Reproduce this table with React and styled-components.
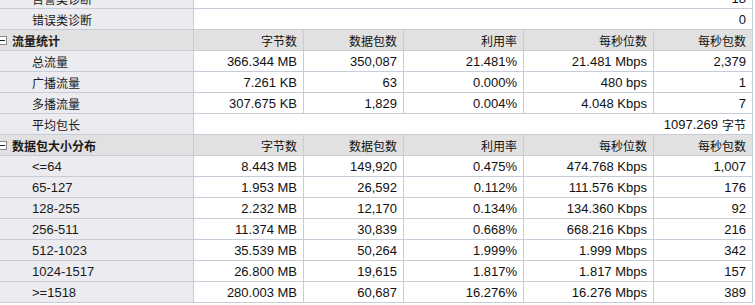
import styled, {createGlobalStyle} from 'styled-components';

const GlobalStyle = createGlobalStyle`
  body {
    margin: 0;
    background: #fff;
    font-family: 'Liberation Sans', 'Noto Sans CJK SC', sans-serif;
    color: #111;
  }
`;

const Viewport = styled.div`
  width: 755px;
  height: 305px;
  overflow: hidden;
`;

const Grid = styled.div`
  display: grid;
  grid-template-columns: 194px 110px 100px 120px 130px 99px;
  grid-auto-rows: 21px;
  width: 753px;
  margin-top: -12px;
`;

const Cell = styled.div`
  box-sizing: border-box;
  display: flex;
  align-items: center;
  border-right: 1px solid #c6ccd8;
  border-bottom: 1px solid #c6ccd8;
  white-space: nowrap;
  overflow: hidden;
`;

const cjkFont = "'Noto Sans CJK SC', sans-serif";
const latinFont = "'Liberation Sans', 'Noto Sans CJK SC', sans-serif";

const LabelCell = styled(Cell)`
  background: ${({$header}) => ($header ? '#e1e1e1' : '#ebebf0')};
  padding-left: ${({$header}) => ($header ? '0' : '32px')};
  font-size: ${({$cjk}) => ($cjk ? '12px' : '13px')};
  font-family: ${({$cjk}) => ($cjk ? cjkFont : latinFont)};
  font-weight: ${({$header}) => ($header ? 700 : 400)};
  color: #1a1a1a;
`;

const ValueCell = styled(Cell)`
  justify-content: flex-end;
  padding-right: 6px;
  background: ${({$header}) => ($header ? '#e1e1e1' : '#fff')};
  font-size: ${({$cjk}) => ($cjk ? '12px' : '13px')};
  font-family: ${({$cjk}) => ($cjk ? cjkFont : latinFont)};
  grid-column: ${({$span}) => ($span ? '2 / -1' : 'auto')};
`;

const Toggle = styled.svg`
  flex: none;
  width: 9px;
  height: 9px;
  margin: 0 5px 0 -2px;
`;

const Unit = styled.span`
  font-family: ${cjkFont};
  font-size: 12px;
  margin-left: 4px;
`;

const headers = ['字节数', '数据包数', '利用率', '每秒位数', '每秒包数'];

const rows = [
  {type: 'merged', label: '告警类诊断', value: '18'},
  {type: 'merged', label: '错误类诊断', value: '0'},
  {type: 'header', label: '流量统计'},
  {type: 'item', label: '总流量', values: ['366.344 MB', '350,087', '21.481%', '21.481 Mbps', '2,379']},
  {type: 'item', label: '广播流量', values: ['7.261 KB', '63', '0.000%', '480 bps', '1']},
  {type: 'item', label: '多播流量', values: ['307.675 KB', '1,829', '0.004%', '4.048 Kbps', '7']},
  {type: 'merged', label: '平均包长', value: '1097.269', unit: '字节'},
  {type: 'header', label: '数据包大小分布'},
  {type: 'item', label: '<=64', values: ['8.443 MB', '149,920', '0.475%', '474.768 Kbps', '1,007']},
  {type: 'item', label: '65-127', values: ['1.953 MB', '26,592', '0.112%', '111.576 Kbps', '176']},
  {type: 'item', label: '128-255', values: ['2.232 MB', '12,170', '0.134%', '134.360 Kbps', '92']},
  {type: 'item', label: '256-511', values: ['11.374 MB', '30,839', '0.668%', '668.216 Kbps', '216']},
  {type: 'item', label: '512-1023', values: ['35.539 MB', '50,264', '1.999%', '1.999 Mbps', '342']},
  {type: 'item', label: '1024-1517', values: ['26.800 MB', '19,615', '1.817%', '1.817 Mbps', '157']},
  {type: 'item', label: '>=1518', values: ['280.003 MB', '60,687', '16.276%', '16.276 Mbps', '389']},
];

const isCjk = (text) => /[\u4e00-\u9fff]/.test(text);

const MinusBox = () => (
  <Toggle viewBox="0 0 9 9">
    <rect x="0.5" y="0.5" width="8" height="8" fill="#fff" stroke="#8a8a8a" />
    <path d="M2 4.5h5" stroke="#222" strokeWidth="1" />
  </Toggle>
);

const Row = ({row}) => {
  if (row.type === 'header') {
    return (
      <>
        <LabelCell $header $cjk>
          <MinusBox />
          {row.label}
        </LabelCell>
        {headers.map((h) => (
          <ValueCell key={h} $header $cjk>
            {h}
          </ValueCell>
        ))}
      </>
    );
  }

  const label = <LabelCell $cjk={isCjk(row.label)}>{row.label}</LabelCell>;

  if (row.type === 'merged') {
    return (
      <>
        {label}
        <ValueCell $span>
          {row.value}
          {row.unit && <Unit>{row.unit}</Unit>}
        </ValueCell>
      </>
    );
  }

  return (
    <>
      {label}
      {row.values.map((v, i) => (
        <ValueCell key={i}>{v}</ValueCell>
      ))}
    </>
  );
};

const App = () => (
  <Viewport>
    <GlobalStyle />
    <Grid>
      {rows.map((row) => (
        <Row key={row.label} row={row} />
      ))}
    </Grid>
  </Viewport>
);

export default App;
